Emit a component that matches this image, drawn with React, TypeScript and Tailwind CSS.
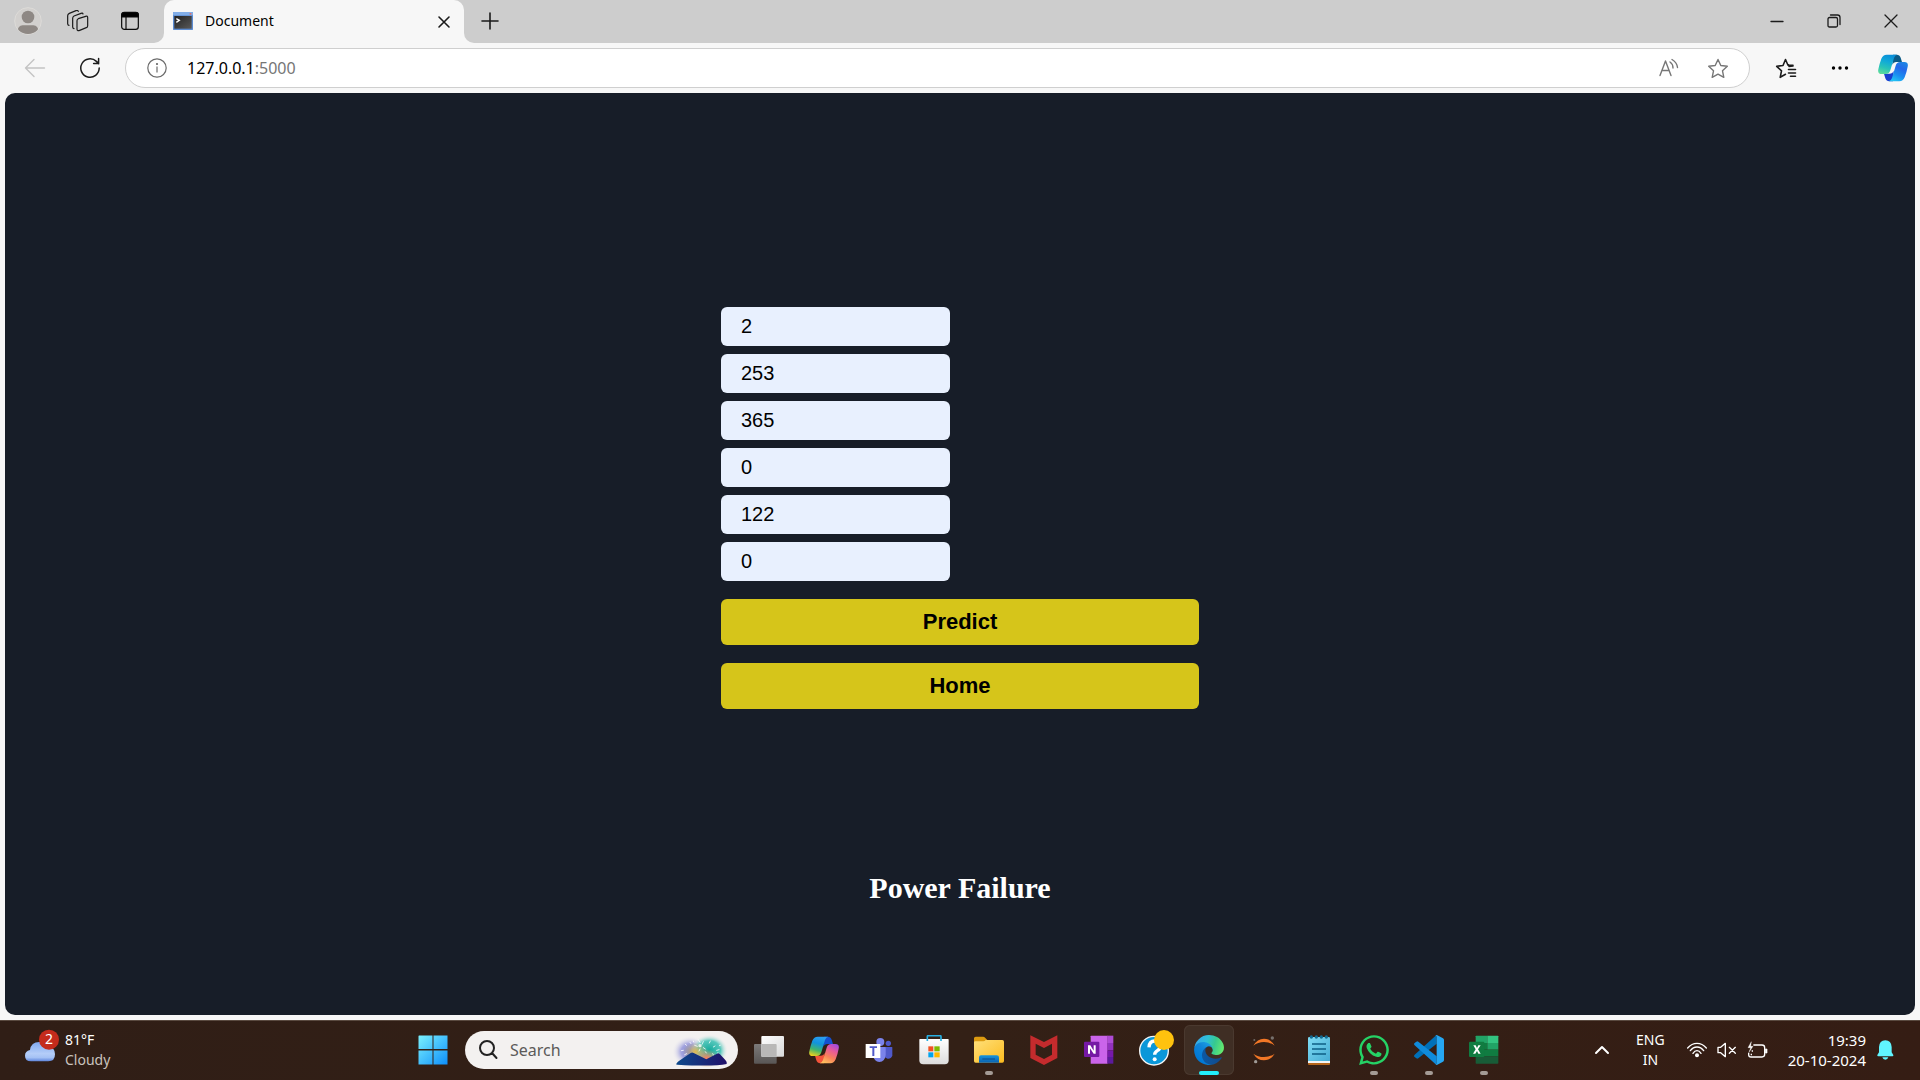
import { useState } from "react";
import type { ReactNode } from "react";
import { FaWhatsapp } from "react-icons/fa";

const UI = "font-['Noto_Sans','Open_Sans',sans-serif]";

/* ---------- Browser icons ---------- */

function Avatar() {
  return (
    <svg width="28" height="28" viewBox="0 0 84 84" aria-hidden="true">
      <defs>
        <clipPath id="av"><circle cx="42" cy="42" r="39" /></clipPath>
      </defs>
      <circle cx="42" cy="42" r="40" fill="#d2d0ce" stroke="#dddbd8" strokeWidth="3" />
      <g clipPath="url(#av)" fill="#8e8884">
        <circle cx="42" cy="30" r="19" />
        <path d="M11 84V72q0-15 15-17h32q15 2 15 17v12z" />
      </g>
    </svg>
  );
}

function WorkspacesIcon() {
  return (
    <svg width="22" height="22" viewBox="0 0 66 66" fill="none" stroke="#1b1b1b" strokeWidth="3.6" strokeLinejoin="round" strokeLinecap="round" aria-hidden="true">
      <path d="M34 26l22-7q6-2 6 4v24q0 5-4 6l-20 8q-8 3-8-4V32q0-4 4-6z" />
      <path d="M48 12q-1-4-6-2L21 18q-4 2-4 7v26q0 4 4 5" />
      <path d="M34 4q-2-4-7-2L7 10q-5 2-5 7v24q0 4 4 5" />
    </svg>
  );
}

function TabActionsIcon() {
  return (
    <svg width="20" height="20" viewBox="0 0 60 60" fill="none" stroke="#0a0a0a" strokeWidth="3.6" aria-hidden="true">
      <rect x="5" y="5" width="50" height="50" rx="8" />
      <path d="M5 18V12q0-8 8-8h34q8 0 8 8v6z" fill="#000" />
      <path d="M18 18v37" />
    </svg>
  );
}

function TerminalFavicon() {
  return (
    <svg width="20" height="18" viewBox="0 0 60 54" aria-hidden="true">
      <defs>
        <linearGradient id="term" x1="0" y1="0" x2="1" y2="1">
          <stop offset="0" stopColor="#222" />
          <stop offset="1" stopColor="#595959" />
        </linearGradient>
      </defs>
      <rect width="60" height="54" rx="2" fill="#5c8cd2" />
      <rect width="60" height="10" rx="2" fill="#82aee8" />
      <rect x="50" y="3" width="5" height="5" fill="#e0706a" />
      <rect x="4" y="12" width="52" height="38" fill="url(#term)" />
      <path d="M10 20l9 5-9 6" fill="none" stroke="#fff" strokeWidth="4" />
    </svg>
  );
}

function Lines({ w, h, d, color = "#1b1b1b", sw = 1.3 }: { w: number; h: number; d: string; color?: string; sw?: number }) {
  return (
    <svg width={w} height={h} viewBox={`0 0 ${w} ${h}`} fill="none" stroke={color} strokeWidth={sw} strokeLinecap="round" strokeLinejoin="round" aria-hidden="true">
      <path d={d} />
    </svg>
  );
}

function ReloadIcon() {
  return (
    <svg width="22" height="22" viewBox="0 0 22 22" fill="none" stroke="#1b1b1b" strokeWidth="1.5" strokeLinecap="round" aria-hidden="true">
      <path d="M20.2 11A9.2 9.2 0 1 1 17.4 4.4L19.6 6.6M19.6 1.6v5h-5" />
    </svg>
  );
}

function InfoIcon() {
  return (
    <svg width="20" height="20" viewBox="0 0 20 20" fill="none" stroke="#6b6b6b" strokeWidth="1.2" aria-hidden="true">
      <circle cx="10" cy="10" r="9.2" />
      <path d="M10 8.6v6" />
      <circle cx="10" cy="6" r="0.5" fill="#6b6b6b" />
    </svg>
  );
}

function CopilotIcon({ id, left, right, tips }: { id: string; left: string[]; right: string[]; tips: string[] }) {
  return (
    <svg width="30" height="28" viewBox="0 0 90 84" aria-hidden="true">
      <defs>
        <linearGradient id={id + "l"} x1=".5" y1="0" x2=".2" y2="1">
          {left.map((c, i) => <stop key={c} offset={i / (left.length - 1)} stopColor={c} />)}
        </linearGradient>
        <linearGradient id={id + "r"} x1=".8" y1="0" x2=".3" y2="1">
          {right.map((c, i) => <stop key={c} offset={i / (right.length - 1)} stopColor={c} />)}
        </linearGradient>
      </defs>
      <path d="M45 2H56q9 0 12 9l4 13H54q-8 0-11 8z" fill={tips[0]} />
      <path d="M45 82H34q-9 0-12-9l-4-14h18q8 0 11-8z" fill={tips[1]} />
      <path d="M26 2h32q-7 1-10 10L37 49q-3 11-14 11H11Q-2 60 1 46q3-16 9-32Q15 2 26 2z" fill={`url(#${id}l)`} />
      <path d="M64 82H32q7-1 10-10l11-37q3-11 14-11h12q13 0 10 14-3 16-9 32-5 12-16 12z" fill={`url(#${id}r)`} />
    </svg>
  );
}

/* ---------- Taskbar icons ---------- */

function WindowsIcon() {
  return (
    <svg width="30" height="30" viewBox="0 0 30 30" aria-hidden="true">
      <defs>
        <linearGradient id="win" gradientUnits="userSpaceOnUse" x1="0" y1="0" x2="30" y2="30">
          <stop offset="0" stopColor="#7df3fe" />
          <stop offset="1" stopColor="#0b8dfb" />
        </linearGradient>
      </defs>
      <path fill="url(#win)" d="M1 .5h13.5V14H.5V1zM15.5.5h14V14h-14zM.5 15.5h14v14H.5zM15.5 15.5h14v14h-14z" />
    </svg>
  );
}

function FireworksArt() {
  return (
    <svg width="56" height="34" viewBox="0 0 168 102" aria-hidden="true">
      <defs>
        <radialGradient id="fwL"><stop offset="0" stopColor="#7a80cc" /><stop offset=".5" stopColor="#a3a4df" /><stop offset="1" stopColor="#f3f1f0" stopOpacity="0" /></radialGradient>
        <radialGradient id="fwR"><stop offset="0" stopColor="#16a99b" /><stop offset=".6" stopColor="#54c7bb" /><stop offset="1" stopColor="#f3f1f0" stopOpacity="0" /></radialGradient>
        <radialGradient id="fwO"><stop offset="0" stopColor="#ff7a5a" /><stop offset="1" stopColor="#e8a060" stopOpacity="0" /></radialGradient>
        <radialGradient id="fwY"><stop offset="0" stopColor="#e0b950" /><stop offset="1" stopColor="#c0b070" stopOpacity="0" /></radialGradient>
        <linearGradient id="fwM" x1="0" x2="1"><stop offset="0" stopColor="#0d4a8c" /><stop offset="1" stopColor="#20106a" /></linearGradient>
      </defs>
      <ellipse cx="54" cy="56" rx="54" ry="48" fill="url(#fwL)" />
      <ellipse cx="112" cy="52" rx="56" ry="48" fill="url(#fwR)" />
      <ellipse cx="70" cy="56" rx="38" ry="28" fill="url(#fwY)" />
      <ellipse cx="104" cy="76" rx="36" ry="28" fill="url(#fwO)" />
      <g stroke="#fff" strokeWidth="2.4" strokeLinecap="round">
        <path d="M84 28l-5-8M90 34l4-8M76 40l-8-3M94 44l6 4M84 48l-3 6M54 28l3 4M40 34l4 3M34 52l-6 1M44 62l-6 3M112 30l3-6M124 42l5-3M134 52l7-2M136 60l5 1M122 62l3 5M100 56l3 4M64 24l1 3M142 38l3-1" />
      </g>
      <circle cx="84" cy="38" r="5" fill="#fff" opacity=".8" />
      <path d="M12 94q2-6 12-12l32-22q4-3 9 0l38 19 32-17q5-3 9 2l16 17q6 6 4 12-40 8-148 2z" fill="url(#fwM)" />
    </svg>
  );
}

function TaskViewIcon() {
  return (
    <svg width="30" height="30" viewBox="0 0 90 90" aria-hidden="true">
      <defs>
        <linearGradient id="tv1" x1="0" y1="0" x2="1" y2="1"><stop offset="0" stopColor="#fff" /><stop offset="1" stopColor="#d8d8d8" /></linearGradient>
        <linearGradient id="tv2" x1="0" y1="0" x2="0" y2="1"><stop offset="0" stopColor="#7c7a79" /><stop offset="1" stopColor="#595655" /></linearGradient>
      </defs>
      <rect x="0" y="27" width="68" height="59" rx="3" fill="url(#tv2)" />
      <rect x="22" y="3" width="68" height="62" rx="3" fill="url(#tv1)" />
      <path d="M22 27h43q3 0 3 3v35H22z" fill="#b9b8b7" />
    </svg>
  );
}

function TeamsIcon() {
  return (
    <svg width="28" height="28" viewBox="0 0 84 84" aria-hidden="true">
      <circle cx="70" cy="22" r="8" fill="#5059c9" />
      <circle cx="46" cy="18" r="12" fill="#7b83eb" />
      <path d="M58 33h23q1 0 1 2v24q-4 10-14 9-8-1-10-8z" fill="#5059c9" />
      <path d="M28 33h32q2 0 2 2v22q-2 20-19 21-15-1-19-18z" fill="#7b83eb" />
      <rect x="2" y="24" width="44" height="42" fill="#fff" />
      <path d="M14 31h22v5h-8v24h-6V36h-8z" fill="#5059c9" />
    </svg>
  );
}

function StoreIcon() {
  return (
    <svg width="30" height="30" viewBox="0 0 90 90" aria-hidden="true">
      <defs><linearGradient id="st" x1="0" y1="0" x2="0" y2="1"><stop offset="0" stopColor="#fff" /><stop offset="1" stopColor="#dcdcdc" /></linearGradient></defs>
      <path d="M1 14q0-2 2-2h84q2 0 2 2v62q0 12-12 12H13Q1 88 1 76z" fill="url(#st)" />
      <path d="M25 18V5q0-3 3-3h35q3 0 3 3v13" fill="none" stroke="#29b0e2" strokeWidth="5" />
      <path d="M28 34h15v15H28z" fill="#f25022" />
      <path d="M46 34h16v15H46z" fill="#7fba00" />
      <path d="M28 52h15v15H28z" fill="#00a4ef" />
      <path d="M46 52h16v15H46z" fill="#ffb900" />
    </svg>
  );
}

function ExplorerIcon() {
  return (
    <svg width="30" height="28" viewBox="0 0 90 84" aria-hidden="true">
      <defs>
        <linearGradient id="fe" x1="0" y1="0" x2="1" y2="1"><stop offset="0" stopColor="#ffe07a" /><stop offset="1" stopColor="#fcbb1f" /></linearGradient>
        <linearGradient id="fb" x1="0" y1="0" x2="0" y2="1"><stop offset="0" stopColor="#1793dc" /><stop offset="1" stopColor="#0a62b0" /></linearGradient>
      </defs>
      <path d="M0 7q0-5 5-5h22q4 0 7 4l6 6v14H0z" fill="#dc9a10" />
      <path d="M0 18q0-2 4-2h24q4 0 7-4h50q5 0 5 5v58q0 5-5 5H5q-5 0-5-5z" fill="url(#fe)" />
      <path d="M15 80V64q0-6 6-6h47q7 0 7 6v16z" fill="url(#fb)" />
      <path d="M25 69h38" stroke="#0a4a8c" strokeWidth="3" />
    </svg>
  );
}

function McAfeeIcon() {
  return (
    <svg width="28" height="30" viewBox="0 0 84 90" aria-hidden="true">
      <path fillRule="evenodd" d="M1 1l41 20L82 1v68L42 90 1 69zM17 26v33l25 13 24-13V26L42 39z" fill="#c42b2d" />
    </svg>
  );
}

function OneNoteIcon() {
  return (
    <svg width="30" height="30" viewBox="0 0 90 90" aria-hidden="true">
      <path d="M20 4q0-2 2-2h49v84H20z" fill="#ca64ea" />
      <path d="M70 2h18v22H70z" fill="#ae4bd5" />
      <path d="M70 24h18v22H70z" fill="#9332bf" />
      <path d="M70 46h18v20H70z" fill="#7719aa" />
      <path d="M70 66h18v20H70z" fill="#5c1a9c" />
      <rect x="0" y="20" width="46" height="46" rx="3" fill="#7519a4" />
      <path d="M12 56V31h7l10 16V31h6v25h-6L18 40v16z" fill="#fff" />
    </svg>
  );
}

function HelpIcon() {
  return (
    <svg width="40" height="40" viewBox="0 0 120 120" aria-hidden="true">
      <circle cx="60" cy="62" r="43" fill="#0a97d9" stroke="#f4f4f4" strokeWidth="4" />
      <path d="M45 52q1-19 17-19 17 0 17 15 0 9-9 14-8 5-8 12" fill="none" stroke="#fff" strokeWidth="10" />
      <circle cx="62" cy="88" r="6" fill="#fff" />
      <circle cx="90" cy="30" r="30" fill="#ffc20e" />
    </svg>
  );
}

function EdgeIcon() {
  return (
    <svg width="30" height="30" viewBox="4 4 257 257" aria-hidden="true">
      <defs>
        <linearGradient id="e1" x1="63" x2="241" y1="177" y2="177" gradientUnits="userSpaceOnUse"><stop offset="0" stopColor="#0c59a4" /><stop offset="1" stopColor="#114a8b" /></linearGradient>
        <linearGradient id="e2" x1="157" x2="46" y1="100" y2="220" gradientUnits="userSpaceOnUse"><stop offset="0" stopColor="#1b9de2" /><stop offset=".4" stopColor="#0f84d8" /><stop offset="1" stopColor="#0078d4" /></linearGradient>
        <linearGradient id="e3" x1="20" x2="250" y1="70" y2="140" gradientUnits="userSpaceOnUse"><stop offset="0" stopColor="#35a9ea" /><stop offset=".35" stopColor="#2fc0d6" /><stop offset=".65" stopColor="#36c98f" /><stop offset="1" stopColor="#66eb6e" /></linearGradient>
      </defs>
      <path fill="url(#e1)" d="M235.68 195.46a93.73 93.73 0 0 1-10.54 4.71 101.87 101.87 0 0 1-35.9 6.46c-47.32 0-88.54-32.55-88.54-74.32A31.48 31.48 0 0 1 117.13 105c-42.8 1.8-53.8 46.4-53.8 72.53 0 73.88 68.09 81.37 82.76 81.37 7.91 0 19.84-2.3 27-4.56l1.31-.44a128.34 128.34 0 0 0 66.6-52.8 4 4 0 0 0-5.32-5.64z" />
      <path fill="url(#e2)" d="M110.34 246.34A79.2 79.2 0 0 1 87.6 225a80.72 80.72 0 0 1 29.53-120c3.12-1.47 8.45-4.13 15.54-4a32.35 32.35 0 0 1 25.69 13 31.88 31.88 0 0 1 6.36 18.66c0-.21 24.46-79.6-80-79.6-43.9 0-80 41.66-80 78.21a130.15 130.15 0 0 0 12.11 56 128 128 0 0 0 156.38 67.11 75.55 75.55 0 0 1-62.78-8z" />
      <path fill="url(#e3)" d="M156.94 153.78c-.81 1.05-3.3 2.5-3.3 5.66 0 2.61 1.7 5.12 4.72 7.23 14.38 10 41.49 8.68 41.56 8.68a59.56 59.56 0 0 0 30.27-8.35 61.38 61.38 0 0 0 30.43-52.88c.26-22.41-8-37.31-11.34-43.91C228.09 28.76 182.35 4.63 132.61 4.63a128 128 0 0 0-128 126.2c.48-36.54 36.8-66.05 80-66.05 3.5 0 23.46.34 42 10.07 16.34 8.58 24.9 18.94 30.85 29.21 6.18 10.67 7.28 24.15 7.28 29.52s-2.74 13.33-7.8 20.2z" />
    </svg>
  );
}

function JupyterIcon() {
  return (
    <svg width="24" height="30" viewBox="0 0 72 90" aria-hidden="true">
      <path d="M4 32Q16 11 36 11t32 21Q54 21 36 21T4 32z" fill="#f37726" />
      <path d="M4 56q12 20 32 20t32-20Q54 66 36 66T4 56z" fill="#f37726" />
      <circle cx="61" cy="9" r="5" fill="#76706c" />
      <circle cx="11" cy="80" r="5" fill="#a09b97" />
      <circle cx="7" cy="15" r="3" fill="#6f6a66" />
    </svg>
  );
}

function NotepadIcon() {
  return (
    <svg width="22" height="30" viewBox="0 0 66 90" aria-hidden="true">
      <defs><linearGradient id="np" x1="0" y1="0" x2="1" y2="1"><stop offset="0" stopColor="#7fdcf4" /><stop offset="1" stopColor="#46acd4" /></linearGradient></defs>
      <path d="M0 70h66v17q0 3-3 3H3q-3 0-3-3z" fill="#b5651a" />
      <path d="M0 70h66v14H0z" fill="#f3f3f3" />
      <path d="M0 10q0-4 4-4h58q4 0 4 4v68H0z" fill="url(#np)" />
      <g fill="#146a90"><circle cx="10" cy="6" r="5" /><circle cx="25" cy="6" r="5" /><circle cx="40" cy="6" r="5" /><circle cx="55" cy="6" r="5" /></g>
      <path d="M12 27h42M12 42h42M12 57h42" stroke="#0e5f85" strokeWidth="5" />
    </svg>
  );
}

function VsCodeIcon() {
  return (
    <svg width="30" height="30" viewBox="0 0 90 90" aria-hidden="true">
      <path d="M2 59q-4 4 0 7l5 4q3 2 6 0L68 26V2L64 3z" fill="#0070b8" />
      <path d="M2 31q-4-4 0-7l5-4q3-2 6 0l55 44v24l-4-1z" fill="#0f8bdb" />
      <path d="M63 88q3 3 7 1l17-9q3-2 3-5V15q0-3-3-5L70 1q-4-2-7 1 5-2 5 4v78q0 6-5 4z" fill="#26a7f2" />
    </svg>
  );
}

function ExcelIcon() {
  return (
    <svg width="30" height="30" viewBox="0 0 90 90" aria-hidden="true">
      <path d="M22 2h33v22H20V4q0-2 2-2z" fill="#21a366" />
      <path d="M55 2h31q2 0 2 2v20H55z" fill="#33c481" />
      <path d="M20 24h35v20H20z" fill="#107c41" />
      <path d="M55 24h33v20H55z" fill="#21a366" />
      <path d="M20 44h68v20H20z" fill="#107c41" />
      <path d="M20 64h68v20q0 2-2 2H22q-2 0-2-2z" fill="#185c37" />
      <rect x="0" y="20" width="46" height="46" rx="3" fill="#107c41" />
      <path d="M12 56l8-13-7-12h7l4 8 4-8h7l-8 12 8 13h-7l-4-8-5 8z" fill="#fff" />
    </svg>
  );
}

function WeatherIcon() {
  return (
    <svg width="36" height="34" viewBox="0 0 108 102" aria-hidden="true">
      <defs><linearGradient id="cl" x1="0" y1="0" x2="0" y2="1"><stop offset="0" stopColor="#7fa8f0" /><stop offset=".6" stopColor="#b4cdf8" /><stop offset=".8" stopColor="#a5c2f5" /><stop offset="1" stopColor="#5d84dc" /></linearGradient></defs>
      <path d="M18 97Q0 97 0 80q0-14 15-17 3-24 28-24 18 0 26 17 21-2 21 20 0 21-20 21z" fill="url(#cl)" />
      <circle cx="72" cy="32" r="30" fill="#c42b1c" />
    </svg>
  );
}

function WifiIcon() {
  return (
    <svg width="20" height="16" viewBox="0 0 60 48" fill="none" stroke="#fff" strokeWidth="4" strokeLinecap="round" aria-hidden="true">
      <path d="M2 18Q14 4 30 4t28 14M10 26q8-11 20-11t20 11M18 34q5-8 12-8t12 8" />
      <circle cx="30" cy="40" r="4" fill="#fff" />
    </svg>
  );
}

function MuteIcon() {
  return (
    <svg width="20" height="16" viewBox="0 0 60 48" fill="none" stroke="#fff" strokeWidth="4" strokeLinejoin="round" strokeLinecap="round" aria-hidden="true">
      <path d="M3 16h8L25 4v40L11 32H3zM37 16l18 18M55 16L37 34" />
    </svg>
  );
}

function BatteryIcon() {
  return (
    <svg width="21" height="18" viewBox="0 0 63 54" fill="none" stroke="#fff" strokeWidth="4" strokeLinejoin="round" aria-hidden="true">
      <path d="M19 12h26q8 0 8 8v20q0 8-8 8H12q-7 0-7-7v-6" />
      <path d="M55 24h5v12h-5z" fill="#fff" strokeWidth="2" />
      <path d="M13 2L3 20h8L6 34l12-18h-7z" fill="#fff" strokeWidth="1" />
      <path d="M13 38v5M14 30h4" />
    </svg>
  );
}

function BellIcon() {
  return (
    <svg width="17" height="20" viewBox="0 0 51 60" fill="#60f5ff" aria-hidden="true">
      <path d="M25 1q18 1 19 20v16l5 8q1 4-3 4H4q-4 0-3-4l5-8V21Q7 2 25 1zM16 52h18q-2 7-9 7t-9-7z" />
    </svg>
  );
}

/* ---------- Taskbar ---------- */

type App = { name: string; icon: ReactNode; running?: boolean; active?: boolean };

const apps: App[] = [
  { name: "Task View", icon: <TaskViewIcon /> },
  { name: "Copilot", icon: <CopilotIcon id="tb" left={["#2a9df0", "#1193dd", "#3fb56c", "#f2d01c"]} right={["#a24be0", "#e95a98", "#f98159", "#ffc05e"]} tips={["#1450d0", "#f4533a"]} /> },
  { name: "Teams", icon: <TeamsIcon /> },
  { name: "Microsoft Store", icon: <StoreIcon /> },
  { name: "File Explorer", icon: <ExplorerIcon />, running: true },
  { name: "McAfee", icon: <McAfeeIcon /> },
  { name: "OneNote", icon: <OneNoteIcon /> },
  { name: "Get Help", icon: <HelpIcon /> },
  { name: "Edge", icon: <EdgeIcon />, active: true },
  { name: "Jupyter", icon: <JupyterIcon /> },
  { name: "Notepad", icon: <NotepadIcon /> },
  { name: "WhatsApp", icon: <FaWhatsapp size={34} color="#25d366" />, running: true },
  { name: "Visual Studio Code", icon: <VsCodeIcon />, running: true },
  { name: "Excel", icon: <ExcelIcon />, running: true },
];

function TaskbarApp({ app }: { app: App }) {
  return (
    <button
      aria-label={app.name}
      className={
        app.active
          ? "relative flex size-[50px] items-center justify-center rounded-md bg-[#3f2e24] inset-ring inset-ring-[#4a392f]"
          : "relative flex size-[50px] items-center justify-center rounded-md"
      }
    >
      {app.icon}
      {app.active && <span className="absolute bottom-0 h-1 w-5 rounded-full bg-[#22effc]" />}
      {app.running && <span className="absolute bottom-0 h-1 w-2 rounded-full bg-[#a49b95]" />}
    </button>
  );
}

function Taskbar() {
  return (
    <footer className="grid h-[60px] grid-cols-[1fr_auto_1fr] items-center border-t border-[#5a4a40] bg-linear-to-r from-[#301e16] via-[#332016] to-[#351d14] pb-px text-white">
      <button className="flex h-full items-center gap-1 pl-[25px] text-left">
        <span className="relative mb-2">
          <WeatherIcon />
          <span className="absolute top-0 left-[14px] w-5 text-center text-sm leading-5">2</span>
        </span>
        <span className="flex flex-col text-sm leading-5">
          <span>81°F</span>
          <span className="text-[#c9c2bd]">Cloudy</span>
        </span>
      </button>

      <div className="flex items-center pr-1">
        <button aria-label="Start" className="flex h-[50px] w-[55px] items-center justify-center"><WindowsIcon /></button>
        <div className="mr-1 ml-[5px] flex h-[38px] w-[273px] items-center rounded-full bg-[#f3f1f0] pr-[10px] pl-3">
          <Lines w={22} h={22} sw={2} color="#222" d="M17 9A7 7 0 1 1 3 9A7 7 0 1 1 17 9M15 14L19.500 19" />
          <input aria-label="Search" placeholder="Search" className="ml-[11px] w-0 flex-1 bg-transparent text-base leading-6 outline-none placeholder:text-[#5c5a59]" />
          <FireworksArt />
        </div>
        <div className="flex gap-[5px] px-0.5">
          {apps.map((a) => <TaskbarApp key={a.name} app={a} />)}
        </div>
      </div>

      <div className="flex h-full items-center justify-end pr-[26px]">
        <button aria-label="Show hidden icons" className="mr-[26px]"><Lines w={16} h={10} sw={2} color="#fff" d="M2 8L8 2L14 8" /></button>
        <button className="mr-[22px] text-center text-sm leading-5">ENG<br />IN</button>
        <button aria-label="Network, volume, battery" className="mr-5 flex items-center gap-[10px]">
          <WifiIcon /><MuteIcon /><BatteryIcon />
        </button>
        <button className="mr-[11px] text-right text-[15px] leading-5">19:39<br />20-10-2024</button>
        <button aria-label="Notifications"><BellIcon /></button>
      </div>
    </footer>
  );
}

/* ---------- Browser chrome ---------- */

function TabStrip() {
  return (
    <div className="flex h-[43px] bg-[#f7f7f7]">
      <div className="flex w-[164px] items-center rounded-br-[10px] bg-[#cdcdcd] pb-px pl-[14px]">
        <button aria-label="Profile" className="mr-[25px]"><Avatar /></button>
        <button aria-label="Workspaces" className="mr-[31px]"><WorkspacesIcon /></button>
        <button aria-label="Tab actions"><TabActionsIcon /></button>
      </div>
      <div className="w-[300px] bg-linear-to-b from-[#cdcdcd] from-50% to-[#f7f7f7] to-50%">
        <div className="flex h-full items-center rounded-t-[10px] bg-[#f7f7f7] pr-3 pb-0.5 pl-[9px]">
          <TerminalFavicon />
          <span className="ml-3 flex-1 text-sm leading-5">Document</span>
          <button aria-label="Close tab"><Lines w={16} h={16} sw={1.6} d="M3 4L13 14M13 4L3 14" /></button>
        </div>
      </div>
      <div className="flex flex-1 items-center rounded-bl-[10px] bg-[#cdcdcd] pr-px pb-0.5 pl-4">
        <button aria-label="New tab" className="mr-auto"><Lines w={20} h={20} sw={1.6} d="M2 10H18M10 2V18" /></button>
        <button aria-label="Minimize" className="flex w-[57px] justify-center"><Lines w={14} h={14} d="M1 7.500H13" /></button>
        <button aria-label="Restore" className="flex w-[57px] justify-center">
          <Lines w={14} h={14} d="M2.500 3.500H9Q10.500 3.500 10.500 5V11.500Q10.500 13 9 13H2.500Q1 13 1 11.500V5Q1 3.500 2.500 3.500M3.500 1H10.500Q13 1 13 3.500V10.500" />
        </button>
        <button aria-label="Close" className="flex w-[57px] justify-center"><Lines w={14} h={14} d="M1 1L13 13M13 1L1 13" /></button>
      </div>
    </div>
  );
}

const STAR = "M11 1.500L13.800 7.500L20.300 8.300L15.500 12.800L16.800 19.300L11 16.100L5.200 19.300L6.500 12.800L1.700 8.300L8.200 7.500Z";

function Toolbar() {
  return (
    <div className="flex h-[50px] items-center bg-[#f7f7f7] pr-3 pl-6">
      <button aria-label="Back" className="mr-[33px]" disabled><Lines w={22} h={20} sw={1.4} color="#c4c4c4" d="M20.500 10H1.500M10 1.500L1.500 10L10 18.500" /></button>
      <button aria-label="Reload"><ReloadIcon /></button>
      <div className="ml-6 flex h-10 flex-1 items-center rounded-full border border-[#cfcfcf] bg-white pr-5 pl-[21px]">
        <button aria-label="View site information"><InfoIcon /></button>
        <div className="ml-5 flex flex-1 items-center text-base leading-6">
          <input aria-label="Address" defaultValue="127.0.0.1" className="[field-sizing:content] bg-transparent text-black outline-none" />
          <span className="text-[#767676]">:5000</span>
        </div>
        <button aria-label="Read aloud" className="mr-7">
          <Lines w={22} h={20} sw={1.4} color="#767676" d="M3 17.500L8.500 3L14 17.500M5 12.500H12M13 4Q16 6 16 10M15 1.500Q20 4.500 20.500 9.500" />
        </button>
        <button aria-label="Add to favorites"><Lines w={22} h={21} sw={1.4} color="#767676" d={STAR} /></button>
      </div>
      <button aria-label="Favorites" className="ml-[25px]">
        <Lines w={22} h={21} sw={1.6} d="M10.500 16.300L5.200 19.300L6.500 12.800L1.700 8.300L8 7.500L10.500 1.500L13 7.200H18M14 8.500L18 8M13.500 11.500H20.500M13.500 15H20.500M13.500 6.800V7M15.500 18.300H20.500" />
      </button>
      <button aria-label="Settings and more" className="ml-[34px]">
        <svg width="18" height="6" viewBox="0 0 18 6" aria-hidden="true"><circle cx="2.500" cy="3" r="1.700" /><circle cx="9" cy="3" r="1.700" /><circle cx="15.500" cy="3" r="1.700" /></svg>
      </button>
      <button aria-label="Copilot" className="ml-[29px]">
        <CopilotIcon id="tr" left={["#0a8fd8", "#10a9d8", "#28c3b8", "#5fdc9b"]} right={["#1d86e4", "#2468ea", "#1b8df0", "#22c4f4"]} tips={["#0b5a86", "#1a3fd0"]} />
      </button>
    </div>
  );
}

/* ---------- Page ---------- */

function PredictionForm() {
  const [values, setValues] = useState(["2", "253", "365", "0", "122", "0"]);
  return (
    <form className="w-full max-w-[478px] font-['Liberation_Sans',Arial,sans-serif]" onSubmit={(e) => e.preventDefault()}>
      <div className="flex flex-col gap-2">
        {values.map((v, i) => (
          <input
            key={i}
            aria-label={`Reading ${i + 1}`}
            value={v}
            onChange={(e) => setValues(values.map((old, j) => (j === i ? e.target.value : old)))}
            className="h-[39px] w-[229px] rounded-md bg-[#e8f0fe] px-5 pb-px text-xl text-black"
          />
        ))}
      </div>
      <button className="mt-[18px] h-[46px] w-full rounded-md bg-[#d6c51a] pb-0.5 text-[22px] font-bold text-black">Predict</button>
      <button type="button" className="mt-[18px] h-[46px] w-full rounded-md bg-[#d6c51a] pb-0.5 text-[22px] font-bold text-black">Home</button>
    </form>
  );
}

export default function App() {
  return (
    <div className={`flex min-h-screen flex-col bg-[#f7f7f7] text-black ${UI}`}>
      <header>
        <TabStrip />
        <Toolbar />
      </header>
      <main className="mx-[5px] mb-[5px] flex flex-1 flex-col items-center rounded-[10px] bg-[#171d28] pt-[214px]">
        <PredictionForm />
        <h1 className="mt-[161px] font-['Liberation_Serif','Times_New_Roman',serif] text-[30px] leading-9 font-bold text-white">Power Failure</h1>
      </main>
      <Taskbar />
    </div>
  );
}
